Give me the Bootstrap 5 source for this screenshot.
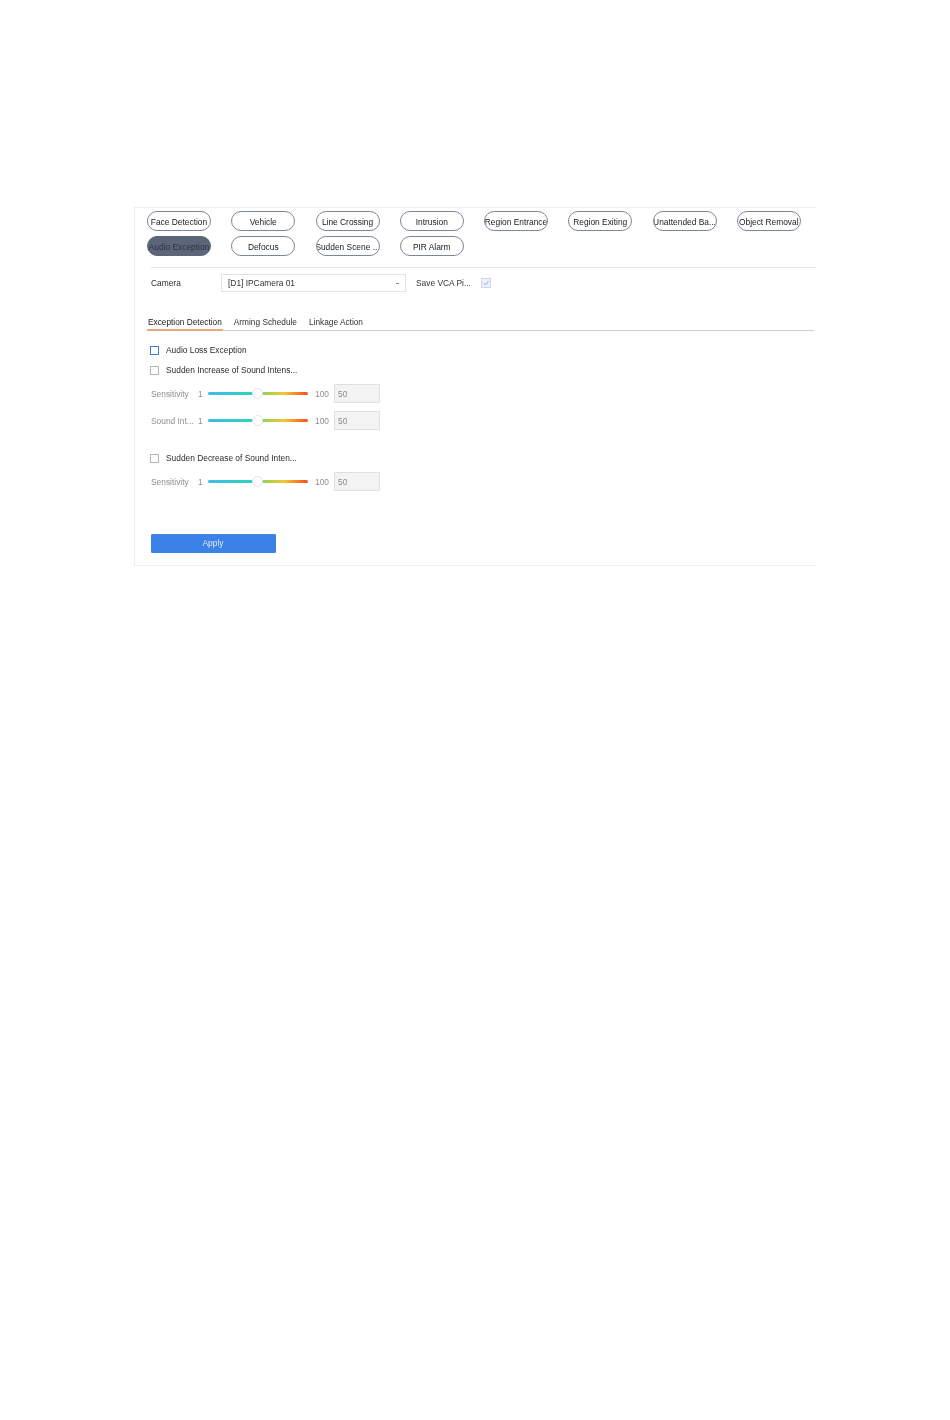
<!DOCTYPE html>
<html lang="en">
<head>
<meta charset="utf-8">
<title>Exception Detection</title>
<link href="https://cdn.jsdelivr.net/npm/bootstrap@5.3.0/dist/css/bootstrap.min.css" rel="stylesheet">
<style>
html,body{background:#fff;}
body{font-family:"Liberation Sans",Arial,sans-serif;font-size:8.4px;color:#2b2b2b;padding:207px 134px 0 134px;line-height:1;}
.vca-panel{width:682px;height:359px;border:1px solid #eeeeee;border-right:0;padding:3px 0 0 12px;filter:blur(.35px);}
.pill-grid{display:grid;grid-template-columns:repeat(8,64px);column-gap:20.25px;row-gap:5px;}
.vca-pill{height:20px;border:1px solid #7d8695;border-radius:10px;background:#fff;display:flex;align-items:center;justify-content:center;white-space:nowrap;overflow:hidden;font-size:8.4px;color:#222;padding:2px 0 0;}
.vca-pill.is-on{background:#5d6579;border-color:#5d6579;color:#2d3340;}
.cam-row{margin:11px 0 0 3px;border-top:1px solid #e8e8e8;height:45px;padding-top:6px;display:flex;align-items:flex-start;}
.cam-label{width:71px;height:18px;display:flex;align-items:center;padding-left:1px;}
.cam-select{width:185px;height:18px;border:1px solid #e3e3e3;display:flex;align-items:center;justify-content:space-between;padding:0 6px;color:#333;}
.cam-caret{width:3px;height:1px;background:#888;}
.save-label{width:65px;height:18px;margin-left:10px;display:flex;align-items:center;color:#333;}
.mini-check{margin-top:4px;}
.tab-strip{width:667px;height:19px;border-bottom:1.5px solid #cfcfcf;display:flex;align-items:flex-start;font-size:8.3px;}
.tab-item{height:19px;padding:6px 1px 0;margin-right:10px;color:#333;white-space:nowrap;}
.tab-item.is-on{color:#222;border-bottom:2px solid #e8a77c;}
.opt-row{display:flex;align-items:center;height:10px;margin-left:3px;gap:7px;}
.opt-box{width:9px;height:9px;border:1px solid #b5b5b5;background:#fff;flex:none;}
.opt-box.is-focus{border:1.5px solid #3f7fdc;}
.gap-first{margin-top:14px;}
.gap-second{margin-top:10px;}
.gap-slide{margin-top:9px;}
.gap-slide-next{margin-top:8px;}
.gap-group{margin-top:23px;}
.slide-row{display:flex;align-items:center;height:19px;margin-left:4px;color:#8f8f8f;}
.slide-name{width:47px;white-space:nowrap;padding-top:1px;}
.slide-min{width:10px;padding-top:1px;}
.slide-track{position:relative;width:100px;height:3px;border-radius:2px;background:linear-gradient(to right,#3fbce6 0,#2fd3bd 44%,#9fd24e 58%,#f7c52c 76%,#ff4d1e 100%);}
.slide-thumb{position:absolute;left:44px;top:-4px;width:11px;height:11px;border-radius:50%;background:#fff;border:1px solid #e4e4e4;}
.slide-max{width:21px;text-align:right;padding-top:1px;}
.slide-val{margin-left:5px;width:46px;height:19px;background:#f3f3f3;border:1px solid #e0e0e0;display:flex;align-items:center;padding:1px 0 0 3px;color:#8a8a8a;}
.apply-btn{width:125px;height:18.5px;margin:43px 0 0 3.5px;background:#3a82e8;border:1px solid #3a82e8;border-radius:1px;color:#dfeafb;font-size:8.4px;padding:0;display:flex;align-items:center;justify-content:center;}
</style>
</head>
<body>
<div class="vca-panel">
  <div class="pill-grid">
    <div class="vca-pill">Face Detection</div>
    <div class="vca-pill">Vehicle</div>
    <div class="vca-pill">Line Crossing</div>
    <div class="vca-pill">Intrusion</div>
    <div class="vca-pill">Region Entrance</div>
    <div class="vca-pill">Region Exiting</div>
    <div class="vca-pill">Unattended Ba...</div>
    <div class="vca-pill">Object Removal</div>
    <div class="vca-pill is-on">Audio Exception</div>
    <div class="vca-pill">Defocus</div>
    <div class="vca-pill">Sudden Scene ...</div>
    <div class="vca-pill">PIR Alarm</div>
  </div>
  <div class="cam-row">
    <div class="cam-label">Camera</div>
    <div class="cam-select"><span>[D1] IPCamera 01</span><span class="cam-caret"></span></div>
    <div class="save-label">Save VCA Pi...</div>
    <svg class="mini-check" width="10" height="10" viewBox="0 0 10 10"><rect x=".5" y=".5" width="9" height="9" fill="#eef1f6" stroke="#cfd6e2"/><path d="M2.5 5l2 2 3-4" fill="none" stroke="#8fb4e6" stroke-width="1"/></svg>
  </div>
  <div class="tab-strip">
    <div class="tab-item is-on">Exception Detection</div>
    <div class="tab-item">Arming Schedule</div>
    <div class="tab-item">Linkage Action</div>
  </div>
  <div class="opt-row gap-first"><span class="opt-box is-focus"></span>Audio Loss Exception</div>
  <div class="opt-row gap-second"><span class="opt-box"></span>Sudden Increase of Sound Intens...</div>
  <div class="slide-row gap-slide"><span class="slide-name">Sensitivity</span><span class="slide-min">1</span><div class="slide-track"><span class="slide-thumb"></span></div><span class="slide-max">100</span><div class="slide-val">50</div></div>
  <div class="slide-row gap-slide-next"><span class="slide-name">Sound Int...</span><span class="slide-min">1</span><div class="slide-track"><span class="slide-thumb"></span></div><span class="slide-max">100</span><div class="slide-val">50</div></div>
  <div class="opt-row gap-group"><span class="opt-box"></span>Sudden Decrease of Sound Inten...</div>
  <div class="slide-row gap-slide"><span class="slide-name">Sensitivity</span><span class="slide-min">1</span><div class="slide-track"><span class="slide-thumb"></span></div><span class="slide-max">100</span><div class="slide-val">50</div></div>
  <button type="button" class="btn apply-btn">Apply</button>
</div>
</body>
</html>
